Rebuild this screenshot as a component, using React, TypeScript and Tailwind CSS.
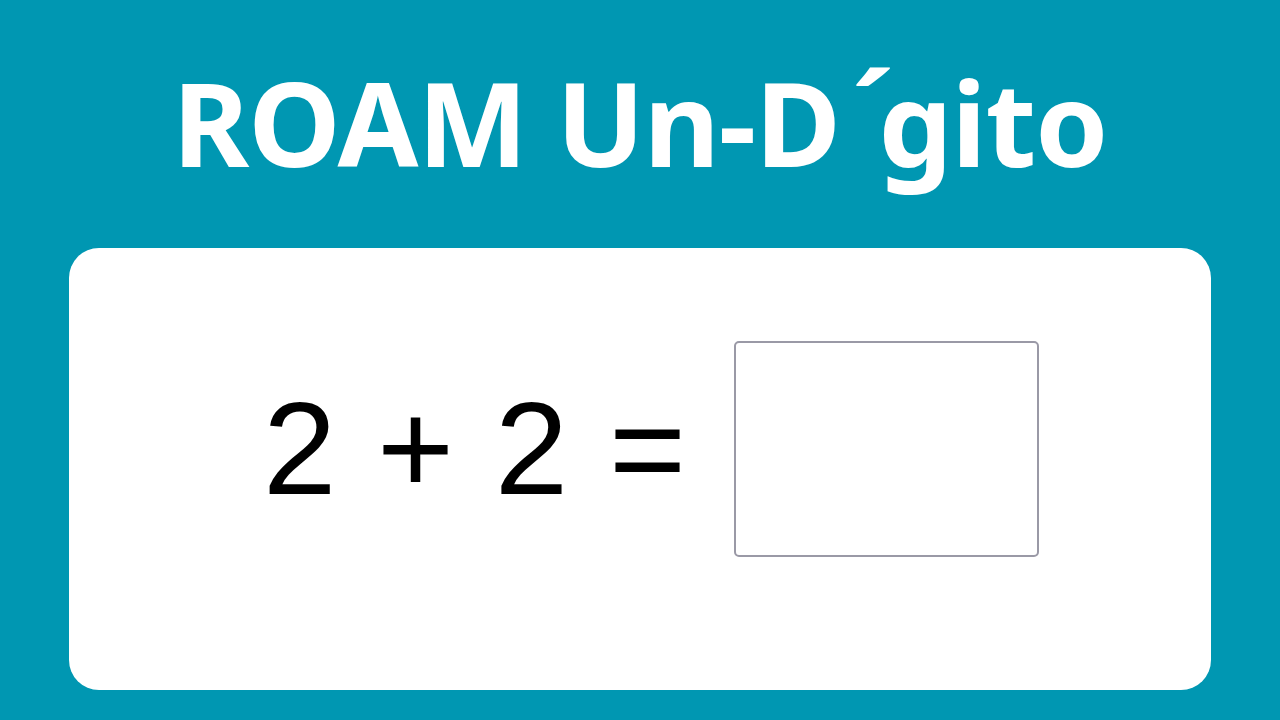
export default function App() {
  return (
    <div className="w-[1280px] h-[720px] bg-[#0097b2] flex flex-col overflow-hidden">
      {/* Título */}
      <div className="h-[248px] flex items-start justify-center pt-[37px]">
        <h1 className="text-white font-bold text-[117px] leading-[150px] font-['Noto_Sans',sans-serif] whitespace-nowrap tracking-[-1px]">
          ROAM Un-D<span className="ml-[12px] -mr-[15px] align-[10px]">´</span>gito
        </h1>
      </div>

      {/* Tarjeta */}
      <div className="mx-[69px] h-[442px] bg-white rounded-[30px] flex items-center justify-center pl-[22px] pb-[40px]">
        <div className="flex items-center gap-[46px]">
          <span className="text-black text-[132px] leading-none font-['Liberation_Sans',Arial,sans-serif] whitespace-nowrap tracking-[2px]">
            2 + 2 =
          </span>
          <div className="w-[305px] h-[216px] border-2 border-[#9a99a6] rounded-[5px] bg-white" />
        </div>
      </div>
    </div>
  );
}
